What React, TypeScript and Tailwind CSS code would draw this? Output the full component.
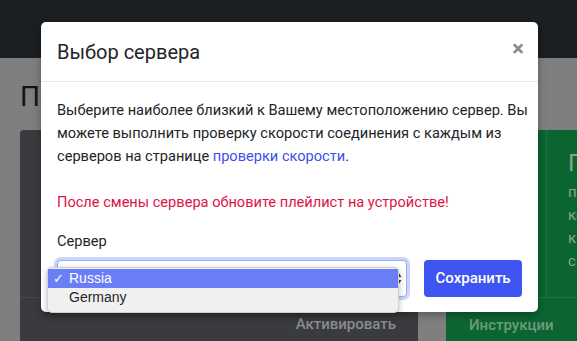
export default function App() {
    return (
        <div className="relative w-[577px] h-[341px] overflow-hidden bg-[#7f7f7f] font-['Roboto',sans-serif]">
            {/* page behind the backdrop */}
            <div className="h-[58px] bg-[#1c1f22]" />
            <div className="pl-[20px] pt-[22px]">
                <h1 className="text-[28px] leading-[34px] text-[#141414] whitespace-nowrap">Подписка</h1>
                <div className="mt-[16px] flex gap-[28px]">
                    <div className="w-[398px] shrink-0 h-[260px] bg-[#393b3f] rounded-t-[4px] flex flex-col">
                        <div className="h-[168px] border-b border-[#46484c]" />
                        <div className="flex justify-end pr-[22px] pt-[15px]">
                            <span className="text-[15px] leading-[22px] font-medium text-[#8a8c8f]">Активировать</span>
                        </div>
                    </div>
                    <div className="w-[160px] shrink-0 h-[260px] bg-[#0b6531] rounded-t-[4px] flex flex-col">
                        <div className="h-[168px] flex border-b border-[#1f7443]">
                            <div className="w-[100px] shrink-0" />
                            <div className="flex-1 border-l border-[#1f7443] pl-[21px] pt-[18px] text-[#86a692] whitespace-nowrap overflow-hidden">
                                <div className="text-[24px] leading-[30px]">Подключение</div>
                                <div className="mt-[3px] text-[15px] leading-[23px]">
                                    <div>подключите</div>
                                    <div>код</div>
                                    <div>к устройству</div>
                                    <div>с помощью</div>
                                </div>
                            </div>
                        </div>
                        <div className="pl-[23px] pt-[15px]">
                            <span className="text-[15px] leading-[22px] font-medium text-[#6f9a7e]">Инструкции</span>
                        </div>
                    </div>
                </div>
            </div>

            {/* modal */}
            <div className="absolute left-[41px] top-[22px] w-[497px] bg-white rounded-[5px] shadow-[0_3px_9px_rgba(0,0,0,0.3)]">
                <div className="h-[60px] pl-[16px] pr-[14px] flex items-center justify-between border-b border-[#e6e6e6]">
                    <h5 className="text-[20px] leading-[28px] text-[#212529]">Выбор сервера</h5>
                    <button className="text-[22px] leading-none font-bold text-[#8a8a8a] -mt-[6px]">×</button>
                </div>
                <div className="px-[16px] pt-[17px] pb-[15px] text-[14.6px] leading-[23px] text-[#212529]">
                    <p className="whitespace-nowrap">
                        Выберите наиболее близкий к Вашему местоположению сервер. Вы<br />
                        можете выполнить проверку скорости соединения с каждым из<br />
                        серверов на странице <a className="text-[#3d4fe8]">проверки скорости</a>.<br />
                        <br />
                        <span className="text-[#dc1446]">После смены сервера обновите плейлист на устройстве!</span>
                    </p>
                    <label className="block mt-[16px] mb-[7px]">Сервер</label>
                    <div className="flex gap-[17px]">
                        <div className="relative w-[351px] h-[37px] rounded-[4px] border border-[#97aaf5] bg-white ring-[3px] ring-[#cbd5fb]">
                            <svg className="absolute right-[4px] top-[11px]" width="7" height="13" viewBox="0 0 7 13">
                                <path d="M3.5 0.5 L6.5 5 L0.5 5 Z" fill="#3a3a3a" />
                                <path d="M3.5 12.5 L6.5 8 L0.5 8 Z" fill="#3a3a3a" />
                            </svg>
                            {/* open native dropdown */}
                            <div className="absolute left-[-11px] top-[6px] w-[352px] rounded-[5px] bg-[#f0f0f0] border border-[#cfcfcf] shadow-[0_2px_6px_rgba(0,0,0,0.25)] py-[1px] font-['Liberation_Sans',sans-serif] text-[14px]">
                                <div className="h-[19px] flex items-center bg-[#6a7ef5] text-white">
                                    <span className="w-[20px] pl-[5px] text-[13px]">✓</span>
                                    <span className="pl-[1px]">Russia</span>
                                </div>
                                <div className="h-[19px] flex items-center text-[#262626]">
                                    <span className="w-[20px]" />
                                    <span className="pl-[1px]">Germany</span>
                                </div>
                                <div className="h-[4px]" />
                            </div>
                        </div>
                        <button className="w-[98px] h-[37px] rounded-[4px] bg-[#3f55f2] text-white text-[15px] font-medium">
                            Сохранить
                        </button>
                    </div>
                </div>
            </div>
        </div>
    )
}
